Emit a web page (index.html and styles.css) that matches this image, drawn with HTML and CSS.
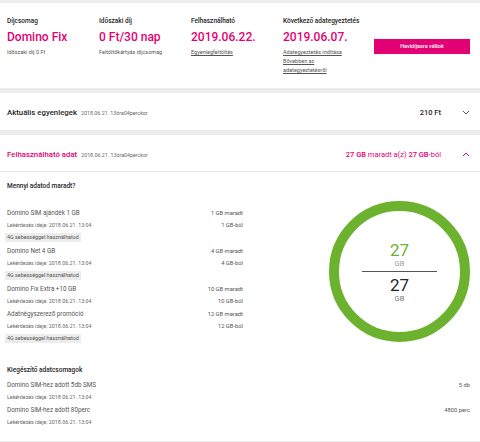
FILE: index.html
```
<!DOCTYPE html>
<html lang="hu">
<head>
<meta charset="utf-8">
<title>Egyenleg</title>
<link rel="stylesheet" href="styles.css">
</head>
<body>
<div class="page">
  <section class="card summary">
    <div class="col">
      <div class="lbl">Díjcsomag</div>
      <div class="big">Domino Fix</div>
      <div class="sub">Időszaki díj 0 Ft</div>
    </div>
    <div class="col">
      <div class="lbl">Időszaki díj</div>
      <div class="big">0 Ft/30 nap</div>
      <div class="sub">Feltöltőkártyás díjcsomag</div>
    </div>
    <div class="col">
      <div class="lbl">Felhasználható</div>
      <div class="big">2019.06.22.</div>
      <div class="sub"><a class="lnk">Egyenlegfeltöltés</a></div>
    </div>
    <div class="col">
      <div class="lbl">Következő adategyeztetés</div>
      <div class="big">2019.06.07.</div>
      <div class="sub"><a class="lnk">Adategyeztetés indítása</a></div>
      <div class="sub tight"><a class="lnk">Bővebben az</a></div>
      <div class="sub tight"><a class="lnk">adategyeztetésről</a></div>
    </div>
    <div class="btncol"><a class="btn">Havidíjasra váltok</a></div>
  </section>

  <section class="card bar">
    <div class="bar-left">
      <span class="bar-title">Aktuális egyenlegek</span>
      <span class="stamp">2018.06.21. 13óra04perckor</span>
    </div>
    <div class="bar-right">
      <span class="amount">210 Ft</span>
      <svg class="chev" width="8" height="5" viewBox="0 0 8 5"><path d="M1 1 L4 4 L7 1" fill="none" stroke="#555" stroke-width="1"/></svg>
    </div>
  </section>

  <section class="card data">
    <div class="bar head">
      <div class="bar-left">
        <span class="bar-title pink">Felhasználható adat</span>
        <span class="stamp">2018.06.21. 13óra04perckor</span>
      </div>
      <div class="bar-right">
        <span class="amount pink"><b>27 GB</b> maradt a(z) <b>27 GB</b>-ból</span>
        <svg class="chev" width="8" height="5" viewBox="0 0 8 5"><path d="M1 4 L4 1 L7 4" fill="none" stroke="#e20074" stroke-width="1"/></svg>
      </div>
    </div>

    <div class="data-body">
      <div class="list">
        <h3 class="sec">Mennyi adatod maradt?</h3>
        <div class="item">
          <div class="line"><span class="name">Domino SIM ajándék 1 GB</span><span class="val">1 GB maradt</span></div>
          <div class="line t"><span class="time">Lekérdezés ideje: 2018.06.21. 13:04</span><span class="val">1 GB-ból</span></div>
          <div class="badge">4G sebességgel használhatod</div>
        </div>
        <div class="item">
          <div class="line"><span class="name">Domino Net 4 GB</span><span class="val">4 GB maradt</span></div>
          <div class="line t"><span class="time">Lekérdezés ideje: 2018.06.21. 13:04</span><span class="val">4 GB-ból</span></div>
          <div class="badge">4G sebességgel használhatod</div>
        </div>
        <div class="item">
          <div class="line"><span class="name">Domino Fix Extra +10 GB</span><span class="val">10 GB maradt</span></div>
          <div class="line t"><span class="time">Lekérdezés ideje: 2018.06.21. 13:04</span><span class="val">10 GB-ból</span></div>
        </div>
        <div class="item">
          <div class="line"><span class="name">Adatnégyszerező promóció</span><span class="val">12 GB maradt</span></div>
          <div class="line t"><span class="time">Lekérdezés ideje: 2018.06.21. 13:04</span><span class="val">12 GB-ból</span></div>
          <div class="badge">4G sebességgel használhatod</div>
        </div>
      </div>
      <div class="ring">
        <div class="num green">27</div>
        <div class="unit">GB</div>
        <div class="rule"></div>
        <div class="num">27</div>
        <div class="unit dark">GB</div>
      </div>
    </div>

    <div class="extra">
      <h3 class="sec">Kiegészítő adatcsomagok</h3>
      <div class="item">
        <div class="line"><span class="name">Domino SIM-hez adott 5db SMS</span><span class="val">5 db</span></div>
        <div class="line t"><span class="time">Lekérdezés ideje: 2018.06.21. 13:04</span></div>
      </div>
      <div class="item">
        <div class="line"><span class="name">Domino SIM-hez adott 80perc</span><span class="val">4800 perc</span></div>
        <div class="line t"><span class="time">Lekérdezés ideje: 2018.06.21. 13:04</span></div>
      </div>
    </div>
  </section>
</div>
</body>
</html>
```
FILE: styles.css
```
html, body {
  margin: 0;
  padding: 0;
}
body {
  background: #ececec;
  font-family: Roboto, "Liberation Sans", Arial, sans-serif;
  color: #262626;
  width: 480px;
  height: 442px;
  overflow: hidden;
}
.page {
  padding-top: 3px;
  display: flex;
  flex-direction: column;
  gap: 5px;
}
.card {
  background: #fff;
}

/* summary */
.summary {
  height: 85px;
  display: flex;
  padding: 14px 0 0 7px;
  box-sizing: border-box;
}
.col {
  width: 92px;
  flex: none;
}
.col:nth-child(4) {
  width: 91px;
}
.lbl {
  font-size: 6.5px;
  line-height: 9px;
  font-weight: 500;
  color: #262626;
}
.big {
  margin-top: 3px;
  font-size: 12px;
  line-height: 16px;
  font-weight: 500;
  color: #e20074;
}
.sub {
  margin-top: 3px;
  font-size: 5.5px;
  line-height: 9px;
  color: #555;
}
.sub.tight {
  margin-top: 0;
}
.lnk {
  color: #555;
  text-decoration: underline;
}
.btncol {
  flex: none;
  padding-top: 22px;
}
.btn {
  display: block;
  width: 96px;
  height: 15px;
  line-height: 15px;
  background: #e20074;
  color: #fff;
  text-align: center;
  font-size: 5.5px;
  font-weight: 500;
  box-sizing: border-box;
}

/* bars */
.bar {
  height: 37px;
  display: flex;
  align-items: center;
  justify-content: space-between;
  padding: 2px 10px 0 7px;
  box-sizing: border-box;
}
.bar-left {
  display: flex;
  align-items: baseline;
  gap: 4px;
}
.bar-title {
  font-size: 7.8px;
  font-weight: 500;
  color: #262626;
}
.pink {
  color: #e20074;
}
.stamp {
  font-size: 5.3px;
  color: #666;
}
.bar-right {
  display: flex;
  align-items: center;
  gap: 21px;
}
.amount {
  font-size: 7.5px;
  font-weight: 500;
  color: #262626;
}
.amount.pink {
  font-weight: 400;
  color: #e20074;
}
.amount b {
  font-weight: 500;
}
.chev {
  display: block;
}

/* data card */
.data .head {
  border-bottom: 1px solid #e6e6e6;
}
.data-body {
  display: flex;
  align-items: flex-start;
  padding: 9px 10px 4px 7px;
}
.list {
  width: 236px;
  flex: none;
}
.sec {
  margin: 0;
  font-size: 6.5px;
  line-height: 10px;
  font-weight: 500;
  color: #262626;
}
.list .sec {
  margin-bottom: 16.5px;
}
.item + .item {
  margin-top: 2px;
}
.line {
  display: flex;
  justify-content: space-between;
  line-height: 11px;
}
.line.t {
  line-height: 12px;
}
.name {
  font-size: 6.3px;
  color: #555;
}
.time {
  font-size: 5.3px;
  color: #666;
}
.val {
  font-size: 5.8px;
  color: #555;
}
.badge {
  display: block;
  width: fit-content;
  margin: 2px 0 4px -2px;
  padding: 0 2px;
  height: 9px;
  line-height: 9px;
  font-size: 5.4px;
  color: #555;
  background: #ececec;
}

.ring {
  margin-left: auto;
  margin-top: 20px;
  width: 141px;
  height: 141px;
  border: 10px solid #6cb22f;
  border-radius: 50%;
  box-sizing: border-box;
  display: flex;
  flex-direction: column;
  align-items: center;
  justify-content: center;
  padding-top: 1px;
}
.num {
  font-size: 17px;
  line-height: 18px;
  color: #262626;
}
.num.green {
  color: #6cb22f;
}
.unit {
  font-size: 7.5px;
  line-height: 9px;
  color: #9a9a9a;
}
.unit.dark {
  color: #777;
}
.rule {
  width: 75px;
  height: 1px;
  background: #555;
  margin: 3.5px 0 4px;
}

.extra {
  padding: 14.5px 10px 13.5px 7px;
}
.extra .sec {
  margin-bottom: 4.5px;
}
```
